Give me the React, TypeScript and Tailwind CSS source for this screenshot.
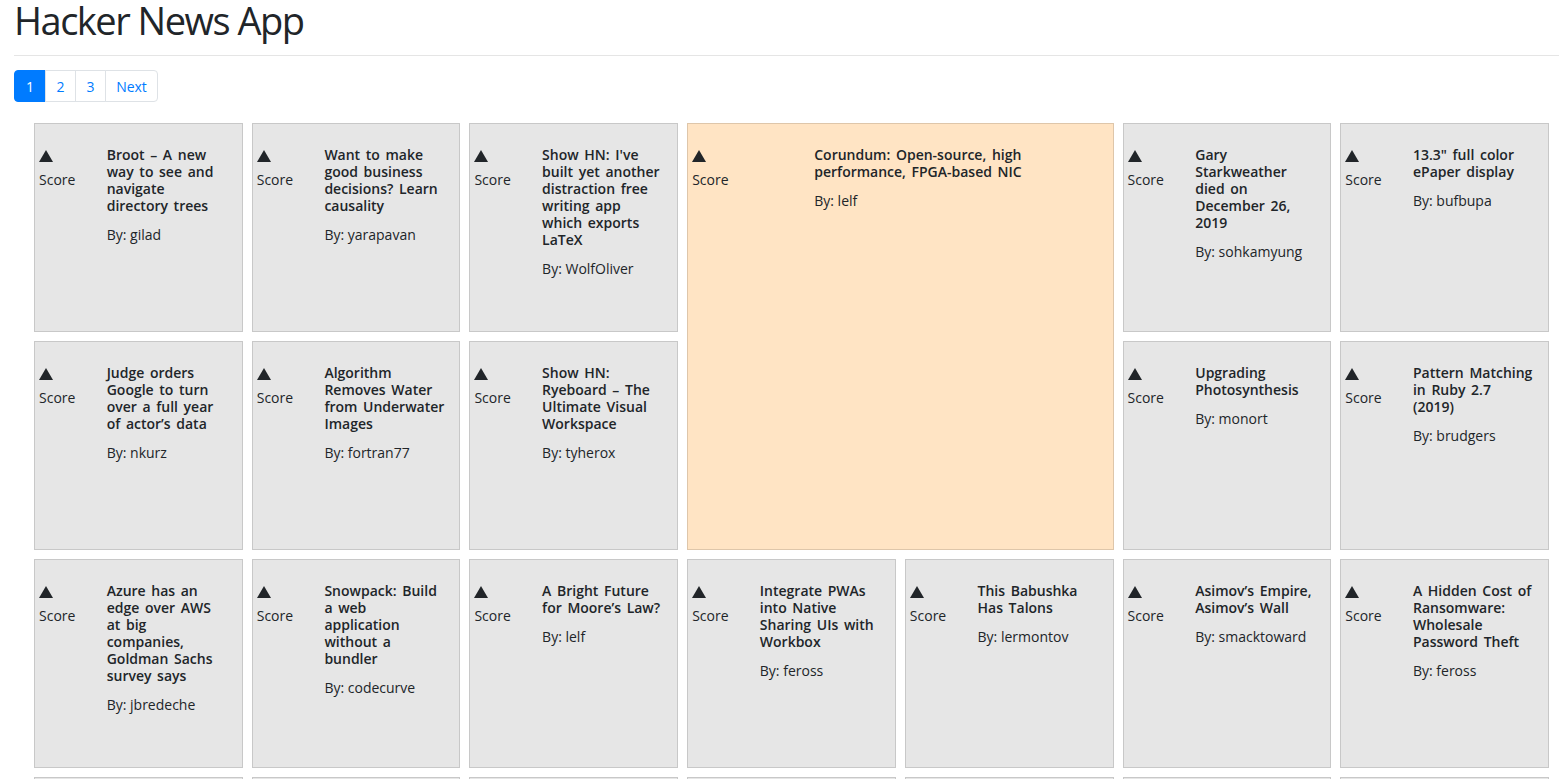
import React from "react";

type Story = {
  title: string;
  by: string;
  featured?: boolean;
};

const stories: Story[] = [
  { title: "Broot – A new way to see and navigate directory trees", by: "gilad" },
  { title: "Want to make good business decisions? Learn causality", by: "yarapavan" },
  { title: "Show HN: I've built yet another distraction free writing app which exports LaTeX", by: "WolfOliver" },
  { title: "Corundum: Open-source, high performance, FPGA-based NIC", by: "lelf", featured: true },
  { title: "Gary Starkweather died on December 26, 2019", by: "sohkamyung" },
  { title: "13.3\" full color ePaper display", by: "bufbupa" },
  { title: "Judge orders Google to turn over a full year of actor’s data", by: "nkurz" },
  { title: "Algorithm Removes Water from Underwater Images", by: "fortran77" },
  { title: "Show HN: Ryeboard – The Ultimate Visual Workspace", by: "tyherox" },
  { title: "Upgrading Photosynthesis", by: "monort" },
  { title: "Pattern Matching in Ruby 2.7 (2019)", by: "brudgers" },
  { title: "Azure has an edge over AWS at big companies, Goldman Sachs survey says", by: "jbredeche" },
  { title: "Snowpack: Build a web application without a bundler", by: "codecurve" },
  { title: "A Bright Future for Moore’s Law?", by: "lelf" },
  { title: "Integrate PWAs into Native Sharing UIs with Workbox", by: "feross" },
  { title: "This Babushka Has Talons", by: "lermontov" },
  { title: "Asimov’s Empire, Asimov’s Wall", by: "smacktoward" },
  { title: "A Hidden Cost of Ransomware: Wholesale Password Theft", by: "feross" },
  { title: "The Decade in Programming Languages", by: "nnx" },
  { title: "How to Write a Compiler", by: "ingve" },
  { title: "Linux Kernel Development Overview", by: "pabs3" },
  { title: "Ask HN: What are you working on?", by: "tosh" },
  { title: "A Tour of Rust's Standard Library", by: "dmit" },
  { title: "SQLite as an Application File Format", by: "mooreds" },
  { title: "Why We Sleep", by: "Tomte" },
];

// widths taken from the pager in the screenshot (borders overlap by 1px)
const pages = [
  { label: "1", width: "w-[32px]" },
  { label: "2", width: "w-[31px]" },
  { label: "3", width: "w-[31px]" },
  { label: "Next", width: "w-[53px]" },
];

function UpArrow() {
  return (
    <svg width="14" height="12" viewBox="0 0 14 12" className="mt-[4px] block">
      <polygon points="7,0 14,12 0,12" fill="#212529" />
    </svg>
  );
}

function StoryCard({ story }: { story: Story }) {
  return (
    <div
      className={`border border-[rgba(0,0,0,0.13)] px-[4px] pt-[22px] ${
        story.featured ? "col-span-2 row-span-2 bg-[#ffe4c4]" : "bg-[#e6e6e6]"
      }`}
    >
      <div className="flex">
        <div className="w-1/4 shrink-0">
          <UpArrow />
          <p className="mt-[7px] text-[14px] leading-[21px]">Score</p>
        </div>
        <div className="w-3/4 pl-[18px] pr-[10px]">
          <h6 className="mb-[10px] text-[14px] font-semibold leading-[17px] [word-spacing:2px]">
            {story.title}
          </h6>
          <p className="text-[14px] leading-[21px]">By: {story.by}</p>
        </div>
      </div>
    </div>
  );
}

export default function App() {
  return (
    <div className="min-h-screen bg-white pl-[14px] text-[#212529] [font-family:'Open_Sans',sans-serif]">
      <h1 className="-mt-[3px] mb-[12px] text-[38px] font-medium leading-[46px] tracking-[-1.5px]">
        Hacker News App
      </h1>
      <hr className="border-t border-[rgba(0,0,0,0.1)]" />

      <nav className="mt-[14px] flex">
        {pages.map((page, i) => (
          <a
            key={page.label}
            href="#"
            className={`-ml-px flex h-[32px] items-center justify-center border text-[14px] first:ml-0 first:rounded-l-[4px] last:rounded-r-[4px] ${page.width} ${
              i === 0
                ? "border-[#007bff] bg-[#007bff] text-white"
                : "border-[#dee2e6] bg-white text-[#007bff]"
            }`}
          >
            {page.label}
          </a>
        ))}
      </nav>

      <div className="mt-[21px] mr-[10px] ml-[20px] grid grid-cols-7 auto-rows-[209px] gap-[9px]">
        {stories.map((story, i) => (
          <StoryCard key={i} story={story} />
        ))}
      </div>
    </div>
  );
}
